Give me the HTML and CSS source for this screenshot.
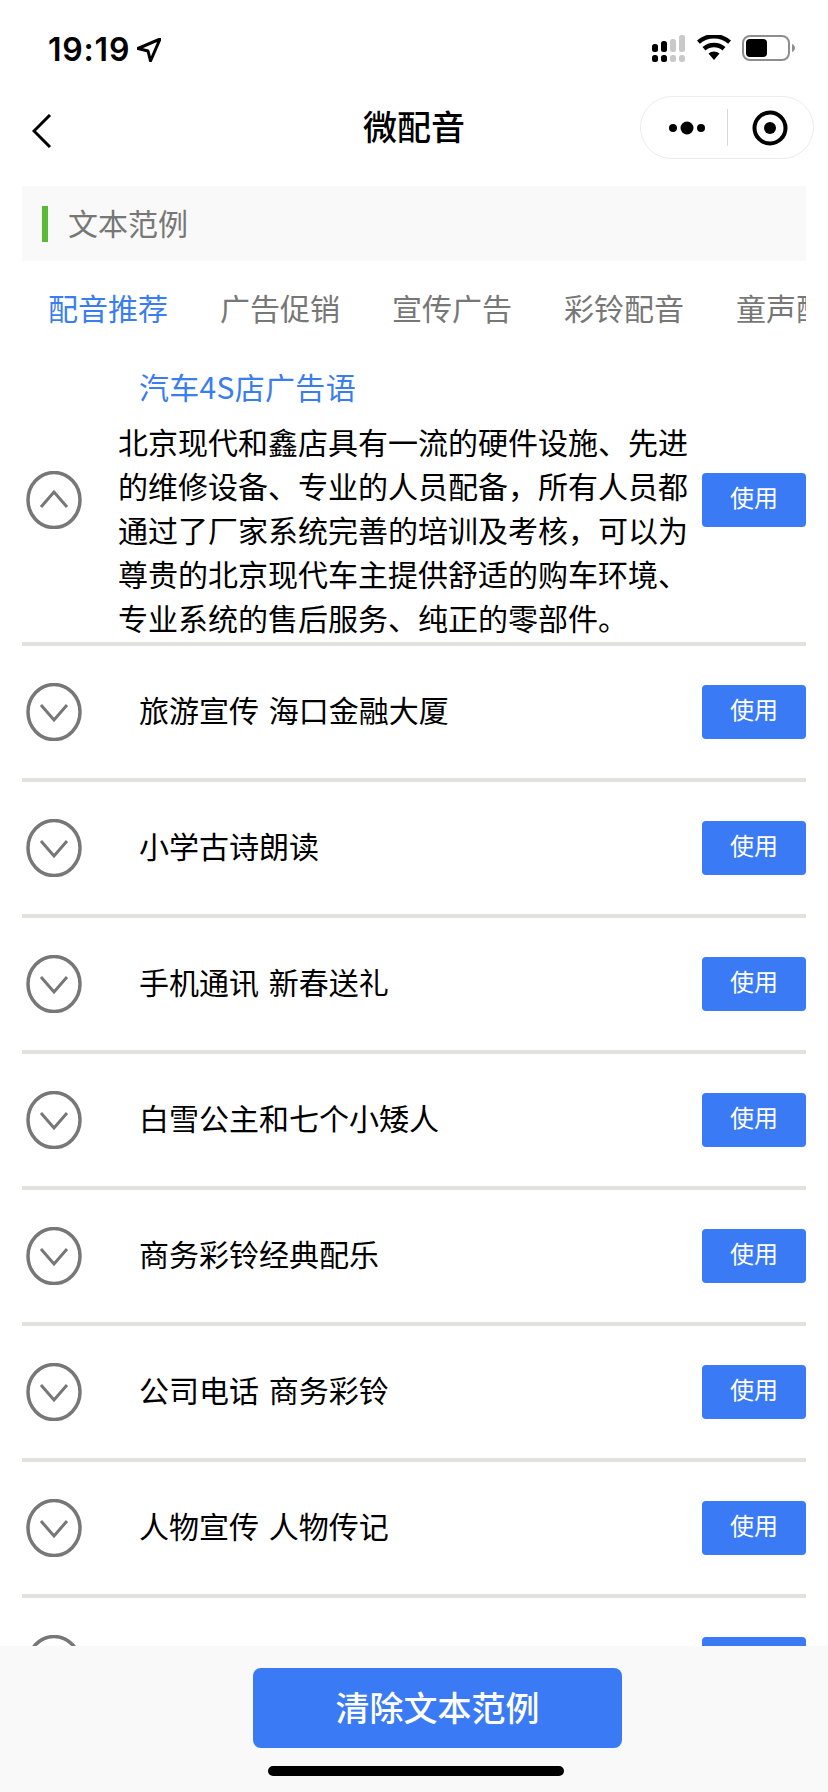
FILE: index.html
```html
<!DOCTYPE html>
<html lang="zh">
<head>
<meta charset="utf-8">
<title>微配音</title>
<link rel="stylesheet" href="styles.css">
</head>
<body>
<div class="page">
  <div class="status">
    <div class="time-wrap">
      <span class="time">19:19</span>
      <svg class="loc" width="24" height="24" viewBox="0 0 24 24"><path d="M23 1 L1 10.500 L11 13 L13.500 23 Z" fill="none" stroke="#000" stroke-width="3" stroke-linejoin="round"/></svg>
    </div>
    <div class="status-right">
      <svg width="34" height="27" viewBox="0 0 34 27">
        <g fill="#000"><rect x="0" y="9" width="6" height="8" rx="2.5"/><rect x="9" y="6" width="6" height="11" rx="2.5"/><rect x="0" y="20" width="6" height="7" rx="2.5"/><rect x="9" y="20" width="6" height="7" rx="2.5"/></g>
        <g fill="#c9c9c9"><rect x="18" y="4" width="6" height="13" rx="2.5"/><rect x="27" y="0" width="6" height="17" rx="2.5"/><rect x="18" y="20" width="6" height="7" rx="2.5"/><rect x="27" y="20" width="6" height="7" rx="2.5"/></g>
      </svg>
      <svg width="34" height="25" viewBox="0 0 34 25"><path d="M17 25 L11.5 18.5 A8.5 8.5 0 0 1 22.5 18.5 Z M8.5 15.5 L5.5 12 A17.5 17.5 0 0 1 28.5 12 L25.5 15.5 A13 13 0 0 0 8.5 15.5 Z M2.8 8.8 L0 5.5 A26 26 0 0 1 34 5.5 L31.2 8.8 A21.5 21.5 0 0 0 2.8 8.8 Z" fill="#000"/></svg>
      <svg width="53" height="26" viewBox="0 0 53 26"><rect x="1" y="1" width="46" height="24" rx="7" fill="#fff" stroke="#8e8e8e" stroke-width="2"/><rect x="4" y="4" width="21" height="18" rx="4" fill="#000"/><path d="M50 9 C52 10 53 11.5 53 13 C53 14.5 52 16 50 17 Z" fill="#8e8e8e"/></svg>
    </div>
  </div>
  <div class="nav">
    <svg class="back" width="20" height="34" viewBox="0 0 20 34"><path d="M18 1 L2 17 L18 33" fill="none" stroke="#000" stroke-width="3"/></svg>
    <div class="title">微配音</div>
    <div class="capsule">
      <svg width="38" height="14" viewBox="0 0 38 14"><circle cx="5" cy="7" r="4" fill="#000"/><circle cx="19" cy="7" r="6.5" fill="#000"/><circle cx="33" cy="7" r="4" fill="#000"/></svg>
      <span class="cap-sep"></span>
      <svg width="36" height="36" viewBox="0 0 36 36"><circle cx="18" cy="18" r="15.5" fill="none" stroke="#000" stroke-width="4"/><circle cx="18" cy="18" r="6" fill="#000"/></svg>
    </div>
  </div>
  <div class="head-bar"><span class="head-mark"></span><span class="head-text">文本范例</span></div>
  <div class="tabs">
    <span class="tab active">配音推荐</span>
    <span class="tab">广告促销</span>
    <span class="tab">宣传广告</span>
    <span class="tab">彩铃配音</span>
    <span class="tab">童声配音</span>
  </div>
  <div class="list">
    <div class="row open">
      <svg class="arrow" width="56" height="58" viewBox="0 0 56 58"><ellipse cx="28" cy="29" rx="26" ry="27.5" fill="none" stroke="#777" stroke-width="3.5"/><path d="M15 36 L28 21 L41 36" fill="none" stroke="#777" stroke-width="3"/></svg>
      <div class="row-body">
        <div class="row-name">汽车4S店广告语</div>
        <div class="row-text">北京现代和鑫店具有一流的硬件设施、先进的维修设备、专业的人员配备，所有人员都通过了厂家系统完善的培训及考核，可以为尊贵的北京现代车主提供舒适的购车环境、专业系统的售后服务、纯正的零部件。</div>
      </div>
      <button class="use">使用</button>
    </div>
    <div class="row">
      <svg class="arrow" width="56" height="58" viewBox="0 0 56 58"><ellipse cx="28" cy="29" rx="26" ry="27.5" fill="none" stroke="#777" stroke-width="3.5"/><path d="M15 22 L28 37 L41 22" fill="none" stroke="#777" stroke-width="3"/></svg>
      <div class="row-label">旅游宣传 海口金融大厦</div>
      <button class="use">使用</button>
    </div>
    <div class="row">
      <svg class="arrow" width="56" height="58" viewBox="0 0 56 58"><ellipse cx="28" cy="29" rx="26" ry="27.5" fill="none" stroke="#777" stroke-width="3.5"/><path d="M15 22 L28 37 L41 22" fill="none" stroke="#777" stroke-width="3"/></svg>
      <div class="row-label">小学古诗朗读</div>
      <button class="use">使用</button>
    </div>
    <div class="row">
      <svg class="arrow" width="56" height="58" viewBox="0 0 56 58"><ellipse cx="28" cy="29" rx="26" ry="27.5" fill="none" stroke="#777" stroke-width="3.5"/><path d="M15 22 L28 37 L41 22" fill="none" stroke="#777" stroke-width="3"/></svg>
      <div class="row-label">手机通讯 新春送礼</div>
      <button class="use">使用</button>
    </div>
    <div class="row">
      <svg class="arrow" width="56" height="58" viewBox="0 0 56 58"><ellipse cx="28" cy="29" rx="26" ry="27.5" fill="none" stroke="#777" stroke-width="3.5"/><path d="M15 22 L28 37 L41 22" fill="none" stroke="#777" stroke-width="3"/></svg>
      <div class="row-label">白雪公主和七个小矮人</div>
      <button class="use">使用</button>
    </div>
    <div class="row">
      <svg class="arrow" width="56" height="58" viewBox="0 0 56 58"><ellipse cx="28" cy="29" rx="26" ry="27.5" fill="none" stroke="#777" stroke-width="3.5"/><path d="M15 22 L28 37 L41 22" fill="none" stroke="#777" stroke-width="3"/></svg>
      <div class="row-label">商务彩铃经典配乐</div>
      <button class="use">使用</button>
    </div>
    <div class="row">
      <svg class="arrow" width="56" height="58" viewBox="0 0 56 58"><ellipse cx="28" cy="29" rx="26" ry="27.5" fill="none" stroke="#777" stroke-width="3.5"/><path d="M15 22 L28 37 L41 22" fill="none" stroke="#777" stroke-width="3"/></svg>
      <div class="row-label">公司电话 商务彩铃</div>
      <button class="use">使用</button>
    </div>
    <div class="row">
      <svg class="arrow" width="56" height="58" viewBox="0 0 56 58"><ellipse cx="28" cy="29" rx="26" ry="27.5" fill="none" stroke="#777" stroke-width="3.5"/><path d="M15 22 L28 37 L41 22" fill="none" stroke="#777" stroke-width="3"/></svg>
      <div class="row-label">人物宣传 人物传记</div>
      <button class="use">使用</button>
    </div>
    <div class="row">
      <svg class="arrow" width="56" height="58" viewBox="0 0 56 58"><ellipse cx="28" cy="29" rx="26" ry="27.5" fill="none" stroke="#777" stroke-width="3.5"/><path d="M15 22 L28 37 L41 22" fill="none" stroke="#777" stroke-width="3"/></svg>
      <div class="row-label"></div>
      <button class="use">使用</button>
    </div>
  </div>
  <div class="footer">
    <button class="clear">清除文本范例</button>
    <div class="home"></div>
  </div>
</div>
</body>
</html>
```
FILE: styles.css
```css
* { box-sizing: border-box; }
html, body { margin: 0; padding: 0; background: #fff; }
body { font-family: "Noto Sans CJK SC", "Noto Sans", sans-serif; color: #000; }
.page { position: relative; width: 828px; height: 1792px; overflow: hidden; background: #fff; }

.status { height: 96px; padding: 30px 33px 0 48px; display: flex; justify-content: space-between; align-items: flex-start; }
.time-wrap { display: flex; align-items: center; gap: 7px; height: 40px; }
.time { font-family: Inter, "Liberation Sans", sans-serif; font-weight: 600; font-size: 32px; letter-spacing: 0.8px; line-height: 40px; }
.status-right { display: flex; align-items: flex-start; gap: 11px; padding-top: 5px; }

.nav { position: relative; height: 63px; padding: 0 14px 0 32px; display: flex; align-items: center; justify-content: space-between; }
.back { display: block; margin-top: 7px; }
.title { position: absolute; left: 0; right: 0; top: 0; text-align: center; font-size: 34px; font-weight: 500; line-height: 59px; }
.capsule { position: relative; width: 174px; height: 63px; border: 1px solid #ececec; border-radius: 32px; display: flex; align-items: center; padding-left: 27px; }
.cap-sep { width: 1px; height: 37px; background: #d9d9d9; margin: 0 24px 0 21px; }

.head-bar { margin: 27px 22px 0; height: 75px; background: #f9f9f9; display: flex; align-items: center; padding-left: 20px; }
.head-mark { width: 6px; height: 36px; background: #58ba35; }
.head-text { margin: 0 0 4px 20px; font-size: 30px; line-height: 36px; color: #777; }

.tabs { margin: 0 22px; height: 97px; padding: 0 0 5px 26px; display: flex; align-items: center; gap: 52px; overflow: hidden; white-space: nowrap; }
.tab { flex: none; font-size: 30px; color: #777; line-height: 40px; }
.tab.active { color: #3a7df0; }

.list { margin: 0 22px; }
.row { height: 136px; border-bottom: 4px solid #e2e2dc; display: flex; align-items: center; }
.row.open { height: 288px; }
.arrow { flex: none; display: block; margin-left: 4px; }
.row-label { flex: 1; margin: 0 0 6px 57px; font-size: 30px; line-height: 40px; word-spacing: 3px; }
.row-body { flex: 1; align-self: stretch; margin-left: 36px; min-width: 0; padding-top: 8px; }
.row-name { margin-left: 21px; font-size: 30px; line-height: 40px; letter-spacing: 0.3px; color: #3a7df0; }
.row-text { width: 572px; margin-top: 13px; font-size: 30px; line-height: 44px; }
.use { flex: none; width: 104px; height: 54px; border: 0; border-radius: 4px; background: #3a7af5; color: #fff; font: inherit; font-size: 24px; line-height: 34px; padding: 0 0 7px; }

.footer { position: absolute; left: 0; right: 0; bottom: 0; height: 146px; background: #f9f9f9; display: flex; flex-direction: column; align-items: center; }
.clear { margin: 22px 0 0 47px; width: 369px; height: 80px; border: 0; border-radius: 8px; background: #3a7af5; color: #fff; font: inherit; font-size: 34px; font-weight: 500; padding: 0 0 3px; }
.home { margin: 18px 0 0 3px; width: 296px; height: 10px; background: #000; border-radius: 5px; }
```
